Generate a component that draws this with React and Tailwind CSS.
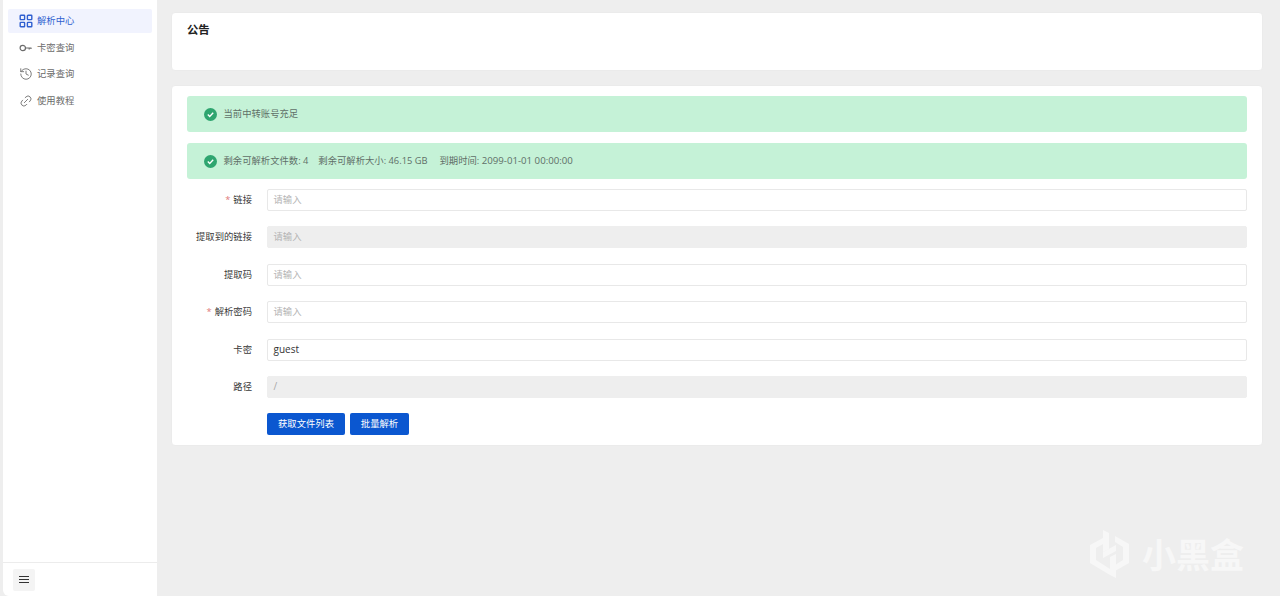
import React from 'react';
import { History, Link2 } from 'lucide-react';

const fontStack = "font-['Segoe_UI','Open_Sans','Noto_Sans_CJK_SC',sans-serif]";

const GridIcon = () => (
  <svg width="14" height="14" viewBox="0 0 14 14" fill="none" stroke="currentColor" strokeWidth="1.4">
    <rect x="1.2" y="1.2" width="4.4" height="4.4" rx="0.6" />
    <rect x="8.4" y="1.2" width="4.4" height="4.4" rx="0.6" />
    <rect x="1.2" y="8.4" width="4.4" height="4.4" rx="0.6" />
    <rect x="8.4" y="8.4" width="4.4" height="4.4" rx="0.6" />
  </svg>
);

const KeyIcon = () => (
  <svg width="14" height="14" viewBox="0 0 14 14" fill="none" stroke="currentColor" strokeWidth="1.2">
    <circle cx="3.8" cy="7" r="2.7" />
    <path d="M6.5 7H12.5M10.2 7v1.6M12 7v1" />
  </svg>
);

const menuItems = [
  { label: '解析中心', icon: <GridIcon />, active: true },
  { label: '卡密查询', icon: <KeyIcon /> },
  { label: '记录查询', icon: <History size={14} strokeWidth={1.5} /> },
  { label: '使用教程', icon: <Link2 size={14} strokeWidth={1.4} className="-rotate-45" /> },
];

const fields = [
  { label: '链接', required: true, placeholder: '请输入' },
  { label: '提取到的链接', placeholder: '请输入', disabled: true },
  { label: '提取码', placeholder: '请输入' },
  { label: '解析密码', required: true, placeholder: '请输入' },
  { label: '卡密', value: 'guest' },
  { label: '路径', value: '/', disabled: true },
];

const CheckBadge = () => (
  <svg width="13" height="13" viewBox="0 0 13 13" className="shrink-0">
    <circle cx="6.500" cy="6.500" r="6.500" fill="#2ea56f" />
    <path d="M3.800 6.600l1.900 1.800 3.500-3.600" fill="none" stroke="#fff" strokeWidth="1.400" />
  </svg>
);

const Alert = ({ children }) => (
  <div className="flex h-9 items-center gap-[6.500px] rounded-[3px] bg-[#c5f2d7] pl-[17px] text-[9.33px] text-[#5f6f67]">
    <CheckBadge />
    <div className="flex items-center whitespace-pre">{children}</div>
  </div>
);

const Field = ({ label, required, placeholder, value, disabled }) => (
  <div className="flex h-[22px] items-center">
    <label className="w-[65px] shrink-0 text-right text-[9.33px] leading-[20px] text-[#3a3a3a]">
      {required && <span className="mr-[3px] text-[#e0787a]">*</span>}
      {label}
    </label>
    <div
      className={`ml-[15px] flex h-[22px] flex-1 items-center rounded-[2px] border px-[5.500px] ${
        disabled ? 'border-[#eeeeee] bg-[#eeeeee]' : 'border-[#e8e8e8] bg-white'
      }`}
    >
      {value ? (
        <span className={`-mt-[1px] text-[10px] ${disabled ? 'text-[#a8a8a8]' : 'text-[#333333]'}`}>{value}</span>
      ) : (
        <span className="text-[9.33px] text-[#b4b4b4]">{placeholder}</span>
      )}
    </div>
  </div>
);

export default function App() {
  return (
    <div className={`relative flex h-[596px] overflow-hidden bg-[#eeeeee] ${fontStack}`}>
      {/* sidebar */}
      <aside className="ml-[3px] flex w-[154px] shrink-0 flex-col rounded-bl-[6px] bg-white">
        <nav className="flex flex-1 flex-col gap-[2.67px] px-[5px] pt-[9px]">
          {menuItems.map((item) => (
            <div
              key={item.label}
              className={`flex h-6 items-center gap-[4px] rounded-[2px] pl-[11px] text-[9.33px] ${
                item.active ? 'bg-[#f1f3fe] text-[#2f5fd0]' : 'text-[#6b6b6b]'
              }`}
            >
              <span className="flex w-[14px] justify-center">{item.icon}</span>
              {item.label}
            </div>
          ))}
        </nav>
        <div className="flex h-[34px] items-center border-t border-[#ececec] pl-[10px]">
          <button className="flex h-[22px] w-[22px] flex-col items-center justify-center gap-[2px] rounded-[2px] bg-[#f4f4f4]">
            <span className="h-px w-[10px] bg-[#333333]" />
            <span className="h-px w-[10px] bg-[#333333]" />
            <span className="h-px w-[10px] bg-[#333333]" />
          </button>
        </div>
      </aside>

      {/* main */}
      <main className="flex flex-1 flex-col gap-[14px] pl-[14px] pr-[17px] pt-3">
        <section className="h-[59px] rounded-[4px] border border-[#ebebeb] bg-white pl-[15px] pt-[9px]">
          <h2 className="text-[11.33px] font-bold text-[#222222]">公告</h2>
        </section>

        <section className="flex h-[361px] flex-col rounded-[4px] border border-[#ebebeb] bg-white px-[15px] pt-[10px]">
          <div className="flex flex-col gap-[11px]">
            <Alert>当前中转账号充足</Alert>
            <Alert>
              <span>剩余可解析文件数: 4</span>
              <span className="ml-[10px]">剩余可解析大小: 46.15 GB</span>
              <span className="ml-[12px]">
                到期时间: <span className="text-[9.67px]">2099-01-01 00:00:00</span>
              </span>
            </Alert>
          </div>
          <div className="mt-[10px] flex flex-col gap-[15.4px]">
            {fields.map((field) => (
              <Field key={field.label} {...field} />
            ))}
            <div className="ml-[80px] flex gap-[5px]">
              <button className="h-[22px] w-[78px] rounded-[2px] bg-[#0b57d0] text-[9.33px] text-white">获取文件列表</button>
              <button className="h-[22px] w-[59px] rounded-[2px] bg-[#0b57d0] text-[9.33px] text-white">批量解析</button>
            </div>
          </div>
        </section>
      </main>

      {/* 小黑盒 watermark */}
      <div className="absolute left-[1084px] top-[525px] flex items-center text-[#f7f7f7]">
        <svg width="60" height="60" viewBox="0 0 60 60" fill="currentColor">
          <path d="M19 5l6 3v16l-6 3z" />
          <path d="M19 27l13-7v6l-13 7z" />
          <path d="M26 32l6-3v24l-6-3z" />
          <path d="M31 11l14 8v19l-14 8v-6l8-5V22l-8-5z" />
          <path d="M19 13L6 20v18l20 12v-6L12 35V23l7-4z" />
        </svg>
        <span className="-ml-[2px] text-[34px] font-bold leading-none">小黑盒</span>
      </div>
    </div>
  );
}
